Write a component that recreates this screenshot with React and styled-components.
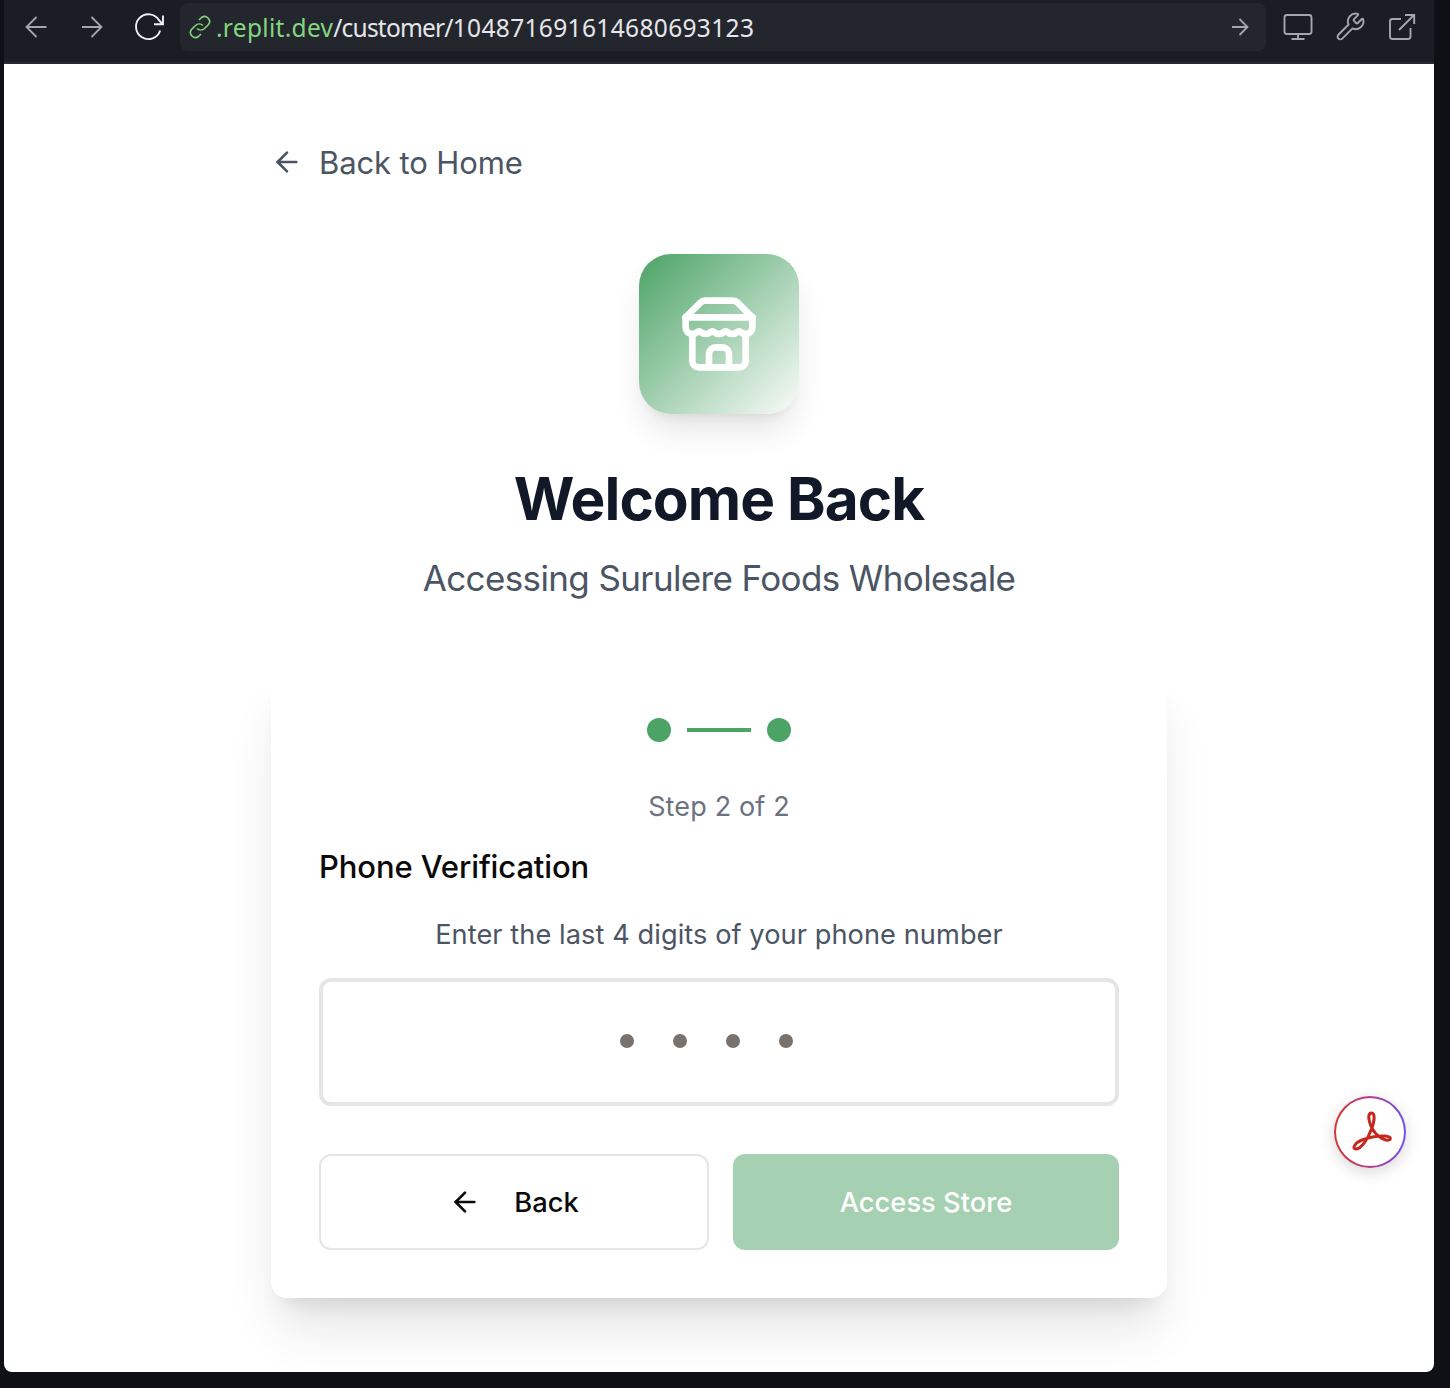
import React from "react";
import styled, { createGlobalStyle } from "styled-components";
import { ArrowLeft, Wrench } from "lucide-react";

const GlobalStyle = createGlobalStyle`
  * { box-sizing: border-box; }
  body { margin: 0; background: #0e1015; font-family: Inter, "Liberation Sans", sans-serif; }
  button, input { font-family: inherit; }
`;

const Window = styled.div`
  width: 1450px;
  height: 1388px;
  padding: 0 16px 16px 4px;
  display: flex;
  flex-direction: column;
  background: #0e1015;
  overflow: hidden;
`;

const Toolbar = styled.header`
  height: 64px;
  flex: none;
  display: flex;
  align-items: flex-start;
  padding: 3px 16px 0 16px;
  background: #1b1d25;
  border-bottom: 2px solid #272935;
`;

const ToolIcon = styled.svg`
  display: block;
  flex: none;
  width: ${(p) => p.$w}px;
  height: 48px;
  margin-left: ${(p) => p.$ml || 0}px;
  fill: none;
  stroke: ${(p) => p.$color || "#a3a6b0"};
  stroke-width: ${(p) => p.$sw || 1.8};
`;

const AddressBar = styled.div`
  display: flex;
  align-items: center;
  width: 1086px;
  height: 48px;
  margin-left: 12px;
  padding: 0 14px 0 8px;
  border-radius: 8px;
  background: #24262e;
`;

const Url = styled.span`
  flex: 1;
  margin-left: 4px;
  padding-top: 2px;
  font-family: "Noto Sans", sans-serif;
  font-size: 24.5px;
  line-height: 46px;
  color: #e6e6ea;
  white-space: nowrap;
`;

const UrlPart = styled.span`
  color: ${(p) => p.$color || "inherit"};
  letter-spacing: ${(p) => p.$ls}px;
`;

const WrenchBox = styled.div`
  display: flex;
  align-items: center;
  height: 47px;
  margin-left: 21px;
  color: #a3a6b0;
`;

const Page = styled.main`
  flex: 1;
  display: flex;
  flex-direction: column;
  align-items: center;
  padding-top: 74px;
  border-radius: 0 0 8px 8px;
  background: #fff;
  overflow: hidden;
`;

const Column = styled.div`
  width: 896px;
  display: flex;
  flex-direction: column;
`;

const HomeLink = styled.a`
  display: flex;
  align-items: center;
  gap: 16px;
  height: 48px;
  color: #4b5563;
  font-size: 31px;
  line-height: 46px;
  letter-spacing: -0.12px;
  white-space: nowrap;
`;

const LinkText = styled.span`
  padding-top: 1px;
`;

const Hero = styled.section`
  display: flex;
  flex-direction: column;
  align-items: center;
  margin-top: 68px;
`;

const LogoTile = styled.div`
  width: 160px;
  height: 160px;
  display: flex;
  align-items: center;
  justify-content: center;
  border-radius: 32px;
  background: linear-gradient(to bottom right, #4ba366, #fafcfa);
  box-shadow: 0 20px 32px -5px rgba(0, 0, 0, 0.11), 0 8px 12px -8px rgba(0, 0, 0, 0.1);
`;

const Title = styled.h1`
  margin: 49px 0 0;
  font-size: 58.5px;
  line-height: 72px;
  font-weight: 700;
  letter-spacing: -0.95px;
  color: #111827;
  white-space: nowrap;
`;

const Subtitle = styled.p`
  margin: 15px 0 1px;
  font-size: 35px;
  line-height: 56px;
  letter-spacing: -0.62px;
  color: #4b5563;
  white-space: nowrap;
`;

const Card = styled.section`
  margin-top: 63px;
  height: 628px;
  padding: 48px;
  display: flex;
  flex-direction: column;
  border-radius: 16px;
  background: #fff;
  box-shadow: 0 38px 52px -9px rgba(0, 0, 0, 0.11), 0 16px 20px -12px rgba(0, 0, 0, 0.1);
`;

const Steps = styled.div`
  display: flex;
  align-items: center;
  justify-content: center;
  gap: 16px;
  height: 24px;
`;

const Dot = styled.span`
  width: 24px;
  height: 24px;
  border-radius: 50%;
  background: #4ba366;
`;

const Connector = styled.span`
  width: 64px;
  height: 4px;
  background: #4ba366;
`;

const StepText = styled.p`
  margin: 45px 0 0;
  font-size: 27px;
  line-height: 40px;
  text-align: center;
  color: #6b7280;
  letter-spacing: 0.15px;
`;

const Label = styled.label`
  margin-top: 20px;
  font-size: 31px;
  line-height: 40px;
  font-weight: 500;
  color: #0c0a09;
  letter-spacing: -0.12px;
`;

const Hint = styled.p`
  margin: 28px 0 0;
  font-size: 27.2px;
  line-height: 40px;
  text-align: center;
  color: #4b5563;
  letter-spacing: 0.07px;
`;

const CodeField = styled.div`
  display: flex;
  align-items: center;
  justify-content: center;
  gap: 39px;
  height: 128px;
  margin-top: 23px;
  padding: 0 24.6px 2px 0;
  border: 4px solid #e5e5e5;
  border-radius: 12px;
`;

const Digit = styled.span`
  width: 14px;
  height: 14px;
  border-radius: 50%;
  background: #78716c;
`;

const Actions = styled.div`
  display: grid;
  grid-template-columns: 390px 386px;
  gap: 24px;
  margin-top: 48px;
`;

const Button = styled.button`
  display: flex;
  align-items: center;
  justify-content: center;
  gap: 33px;
  height: 96px;
  padding: 0;
  border: ${(p) => (p.$primary ? "0" : "2px solid #e5e5e5")};
  border-radius: 12px;
  background: ${(p) => (p.$primary ? "#a5d1b2" : "#fff")};
  color: ${(p) => (p.$primary ? "#fff" : "#0c0a09")};
  font-size: 27.3px;
  font-weight: 500;
`;

const PdfBadge = styled.div`
  position: absolute;
  left: 1334px;
  top: 1096px;
  width: 72px;
  height: 72px;
  padding: 0 0 0 2px;
  display: flex;
  align-items: center;
  justify-content: center;
  border: 2px solid transparent;
  border-radius: 50%;
  background: linear-gradient(#fff, #fff) padding-box,
    linear-gradient(90deg, #cf3a30, #b83a86 50%, #6f50ee) border-box;
  box-shadow: 0 4px 16px rgba(0, 0, 0, 0.16);
`;

const StoreIcon = () => (
  <svg width="80" height="80" viewBox="0 0 24 24" fill="none" stroke="#fff" strokeWidth="2" strokeLinecap="round" strokeLinejoin="round">
    <path d="m2 7 4.41-4.41A2 2 0 0 1 7.83 2h8.34a2 2 0 0 1 1.42.59L22 7" />
    <path d="M4 12v8a2 2 0 0 0 2 2h12a2 2 0 0 0 2-2v-8" />
    <path d="M15 22v-4a2 2 0 0 0-2-2h-2a2 2 0 0 0-2 2v4" />
    <path d="M2 7h20" />
    <path d="M22 7v3a2 2 0 0 1-2 2a2.7 2.7 0 0 1-1.59-.63.7.7 0 0 0-.82 0A2.7 2.7 0 0 1 16 12a2.7 2.7 0 0 1-1.59-.63.7.7 0 0 0-.82 0A2.7 2.7 0 0 1 12 12a2.7 2.7 0 0 1-1.59-.63.7.7 0 0 0-.82 0A2.7 2.7 0 0 1 8 12a2.7 2.7 0 0 1-1.59-.63.7.7 0 0 0-.82 0A2.7 2.7 0 0 1 4 12a2 2 0 0 1-2-2V7" />
  </svg>
);

export default function App() {
  return (
    <Window>
      <GlobalStyle />
      <Toolbar>
        <ToolIcon $w={32} viewBox="20 3 32 48">
          <path d="M46.5 27H26.7M36.5 17L26.5 27L36.5 37" />
        </ToolIcon>
        <ToolIcon $w={32} $ml={24} viewBox="76 3 32 48">
          <path d="M82 27H101.5M91.5 17L101.5 27L91.5 37" />
        </ToolIcon>
        <ToolIcon $w={36} $ml={24} $color="#f0f0f2" $sw={1.9} viewBox="132 3 36 48">
          <path d="M160.2 30.5A12.4 12.4 0 1 1 159 20.2L162.5 24M163 15.5V24.2H154" />
        </ToolIcon>
        <AddressBar>
          <ToolIcon $w={24} $color="#83d67e" $sw={1.6} viewBox="188 3 24 48">
            <path d="M197 28.5A5.5 5.5 0 0 0 204.5 28.5L208.5 24.5A5 5 0 0 0 201.5 17.5L199 20M203 25.5A5.5 5.5 0 0 0 195.5 25.5L191.5 29.5A5 5 0 0 0 198.5 36.5L201 34" />
          </ToolIcon>
          <Url>
            <UrlPart $color="#83d67e" $ls={0.3}>.replit.dev</UrlPart>
            <UrlPart $ls={-0.8}>/customer/</UrlPart>
            <UrlPart $ls={0.35}>104871691614680693123</UrlPart>
          </Url>
          <ToolIcon $w={24} viewBox="1228 3 24 48">
            <path d="M1232 27H1247.5M1239.5 19L1247.5 27L1239.5 35" />
          </ToolIcon>
        </AddressBar>
        <ToolIcon $w={32} $ml={16} $sw={1.9} viewBox="1282 3 32 48">
          <rect x="1284.5" y="15" width="27" height="19" rx="2.5" />
          <path d="M1298 34V39M1291.5 39H1304.5" />
        </ToolIcon>
        <WrenchBox>
          <Wrench size={31} strokeWidth={1.45} />
        </WrenchBox>
        <ToolIcon $w={32} $ml={20} $sw={1.9} viewBox="1386 3 32 48">
          <path d="M1401 19H1392.5A2.5 2.5 0 0 0 1390 21.5V36.5A2.5 2.5 0 0 0 1392.5 39H1408A2.5 2.5 0 0 0 1410.5 36.5V28M1399 30L1414 15M1405 15H1414.2V24" />
        </ToolIcon>
      </Toolbar>
      <Page>
        <Column>
          <HomeLink>
            <ArrowLeft size={32} strokeWidth={2} />
            <LinkText>Back to Home</LinkText>
          </HomeLink>
          <Hero>
            <LogoTile>
              <StoreIcon />
            </LogoTile>
            <Title>Welcome Back</Title>
            <Subtitle>Accessing Surulere Foods Wholesale</Subtitle>
          </Hero>
          <Card>
            <Steps>
              <Dot />
              <Connector />
              <Dot />
            </Steps>
            <StepText>Step 2 of 2</StepText>
            <Label>Phone Verification</Label>
            <Hint>Enter the last 4 digits of your phone number</Hint>
            <CodeField>
              <Digit />
              <Digit />
              <Digit />
              <Digit />
            </CodeField>
            <Actions>
              <Button>
                <ArrowLeft size={32} strokeWidth={2} />
                Back
              </Button>
              <Button $primary>Access Store</Button>
            </Actions>
          </Card>
        </Column>
      </Page>
      <PdfBadge>
        <svg width="42" height="42" viewBox="0 0 42 42" fill="none" stroke="#c5281f" strokeWidth="3" strokeLinejoin="round">
          <path d="M21.5 2C25 2 25 9 21.5 18C18 28 11.5 37.5 6 38C1.5 38 5 31.5 12 29C20 26 28 24.5 35 25C42 25.5 42 30 36 29C29 27.5 22 20 20 12.5C18 6.5 18.5 2 21.5 2Z" />
        </svg>
      </PdfBadge>
    </Window>
  );
}
